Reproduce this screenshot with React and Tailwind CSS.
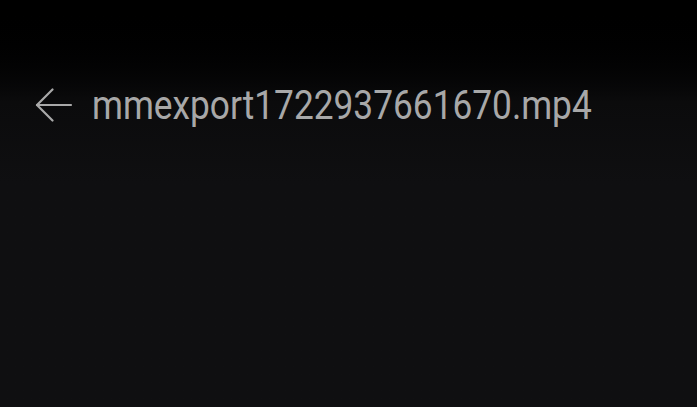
import React from "react";

export default function App() {
  return (
    <div className="w-[697px] h-[407px] overflow-hidden bg-linear-to-b from-black from-0% via-[#0b0b0c] via-25% to-[#0f0f11] to-45%">
      {/* header */}
      <div className="flex items-center h-[60px] mt-[75px] pl-[35px]">
        <button className="shrink-0 w-[38px] h-[34px] flex items-center justify-center">
          <svg width="38" height="34" viewBox="0 0 38 34" fill="none" stroke="#a9a9a9" strokeWidth="2.2" strokeLinecap="round" strokeLinejoin="round">
            <path d="M36 17H2" />
            <path d="M17.5 1.5L2 17l15.5 15.5" />
          </svg>
        </button>
        <h1
          className="ml-[19px] text-[41px] leading-none text-[#a8a8a8] whitespace-nowrap origin-left scale-x-[0.86]"
          style={{ fontFamily: "Roboto, 'Liberation Sans', sans-serif" }}
        >
          mmexport1722937661670.mp4
        </h1>
      </div>
    </div>
  );
}
